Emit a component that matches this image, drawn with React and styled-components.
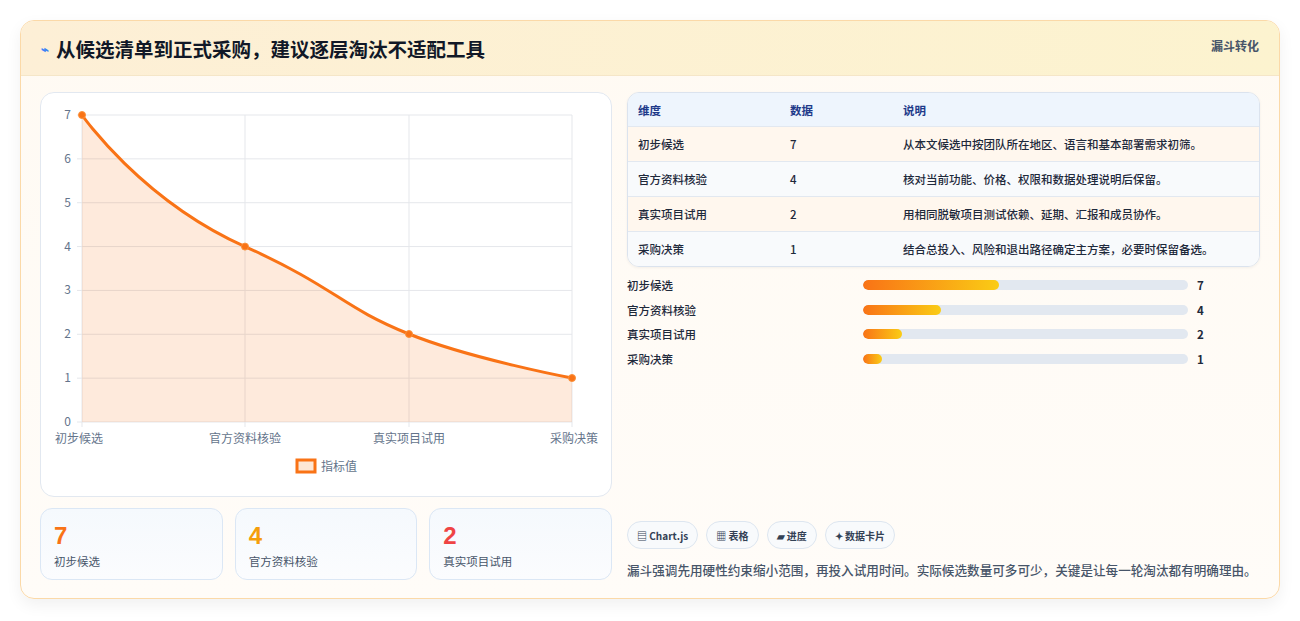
import React from "react";
import styled, { createGlobalStyle } from "styled-components";

const G = createGlobalStyle`
  body{margin:0;background:#fff;font-family:"Noto Sans CJK SC","Noto Sans",sans-serif;color:#1e293b;}
`;
const Page = styled.div`padding:20px 20px 21px;`;
const Card = styled.div`
  border:1px solid #fbd9a8;border-radius:14px;overflow:hidden;
  background:linear-gradient(180deg,#fffaf3,#fffcf8);
  box-shadow:0 6px 16px rgba(0,0,0,0.06);
`;
const Header = styled.div`
  height:54px;display:flex;align-items:center;justify-content:space-between;
  padding:0 20px;background:linear-gradient(90deg,#fdefd6,#fcf3cf);
  border-bottom:1px solid #f5e6c8;
`;
const Title = styled.h2`margin:0;font-size:19.5px;font-weight:700;color:#111827;display:flex;align-items:center;gap:7px;`;
const Bolt = styled.span`color:#3b82f6;font-size:13px;`;
const Tag = styled.span`font-size:12px;font-weight:700;color:#475569;align-self:flex-start;margin-top:16px;`;
const Body = styled.div`display:grid;grid-template-columns:572px 633px;gap:15px;padding:16px 19px 18px;`;
const Col = styled.div`display:flex;flex-direction:column;`;
const Panel = styled.div`height:403px;border:1px solid #e2e8f0;border-radius:14px;background:#fff;overflow:hidden;`;
const Stats = styled.div`display:grid;grid-template-columns:repeat(3,1fr);gap:12px;margin-top:11px;`;
const Stat = styled.div`height:72px;box-sizing:border-box;border:1px solid #dbe7f5;border-radius:12px;background:linear-gradient(180deg,#f5f9fd,#fbfcfe);padding:13px 13px;`;
const StatNum = styled.div`font-size:24px;font-weight:800;line-height:28px;color:${p=>p.c};font-family:"Liberation Sans",sans-serif;`;
const StatLbl = styled.div`font-size:11.5px;color:#475569;margin-top:3px;`;
const Table = styled.div`border:1px solid #dbe3ee;border-radius:12px;overflow:hidden;box-shadow:0 1px 3px rgba(0,0,0,0.05);`;
const Row = styled.div`
  display:grid;grid-template-columns:152px 113px 1fr;align-items:center;padding:0 10px;
  height:${p=>p.h?"33px":"34px"};border-top:${p=>p.first?"none":"1px solid #e2e8f0"};
  background:${p=>p.h?"#eef5fd":p.alt?"#f8fafc":"#fff7ee"};
  font-size:11.5px;font-weight:${p=>p.h?700:500};color:${p=>p.h?"#1e3a8a":"#1e293b"};
`;
const Bars = styled.div`display:flex;flex-direction:column;gap:8px;margin-top:10px;`;
const BarRow = styled.div`display:grid;grid-template-columns:236px 325px 1fr;align-items:center;height:16.5px;font-size:11.5px;font-weight:500;`;
const Track = styled.div`height:10px;border-radius:5px;background:#e2e8f0;overflow:hidden;`;
const Fill = styled.div`height:100%;border-radius:5px;background:linear-gradient(90deg,#f97316,#facc15);`;
const Val = styled.span`padding-left:9px;font-weight:700;`;
const Chips = styled.div`display:flex;gap:8px;margin-top:auto;`;
const Chip = styled.span`height:28px;box-sizing:border-box;padding:0 9px;border:1px solid #dde6f0;border-radius:14px;background:#f8fafc;font-size:10px;font-weight:700;color:#334155;display:flex;align-items:center;gap:3px;`;
const Note = styled.p`margin:10px 0 0;font-size:12.6px;line-height:21px;color:#475569;font-weight:500;`;

const rows=[["初步候选",7,"从本文候选中按团队所在地区、语言和基本部署需求初筛。"],["官方资料核验",4,"核对当前功能、价格、权限和数据处理说明后保留。"],["真实项目试用",2,"用相同脱敏项目测试依赖、延期、汇报和成员协作。"],["采购决策",1,"结合总投入、风险和退出路径确定主方案，必要时保留备选。"]];

function Chart(){
  const x0=41,x1=531,yT=22,yB=329;
  const xs=[41,204,368,531];
  const curve="M41,22 C41,22 100,107 204,153.6 C296,195 299.5,213.5 368,241 C430,266 531,285 531,285";
  return (
    <svg width="572" height="403" style={{display:"block"}} fontFamily="Noto Sans CJK SC, Liberation Sans, sans-serif">
      {[0,1,2,3,4,5,6,7].map(v=>{const y=yB-v*(yB-yT)/7;return <g key={v}><line x1={x0-5} x2={x1} y1={y} y2={y} stroke="#e5e7eb"/><text x={30} y={y+4} fontSize="12" fill="#64748b" textAnchor="end">{v}</text></g>})}
      {xs.map((x,i)=><line key={i} x1={x} x2={x} y1={yT} y2={yB+5} stroke="#e5e7eb"/>)}
      <path d={curve+` L531,${yB} L41,${yB} Z`} fill="rgba(249,115,22,0.15)"/>
      <path d={curve} fill="none" stroke="#f97316" strokeWidth="3"/>
      {[[41,22],[204,153.6],[368,241],[531,285]].map(([x,y],i)=><circle key={i} cx={x} cy={y} r="3.5" fill="#f97316" stroke="#fb923c" strokeWidth="1"/>)}
      {["初步候选","官方资料核验","真实项目试用","采购决策"].map((t,i)=><text key={t} x={xs[i]} y={350} fontSize="12" fill="#64748b" textAnchor={i===0?"start":i===3?"end":"middle"} dx={i===0?-27:i===3?26:0}>{t}</text>)}
      <rect x="256" y="367" width="18" height="12" fill="#fde7d6" stroke="#f97316" strokeWidth="3"/>
      <text x="280" y="378" fontSize="12" fill="#64748b">指标值</text>
    </svg>
  );
}

export default function App(){
  return (<Page><G/><Card>
    <Header><Title><Bolt>⌁</Bolt>从候选清单到正式采购，建议逐层淘汰不适配工具</Title><Tag>漏斗转化</Tag></Header>
    <Body>
      <Col>
        <Panel><Chart/></Panel>
        <Stats>
          <Stat><StatNum c="#f97316">7</StatNum><StatLbl>初步候选</StatLbl></Stat>
          <Stat><StatNum c="#f59e0b">4</StatNum><StatLbl>官方资料核验</StatLbl></Stat>
          <Stat><StatNum c="#ef4444">2</StatNum><StatLbl>真实项目试用</StatLbl></Stat>
        </Stats>
      </Col>
      <Col>
        <Table>
          <Row h first><span>维度</span><span>数据</span><span>说明</span></Row>
          {rows.map((r,i)=><Row key={i} alt={i%2===1}><span>{r[0]}</span><span>{r[1]}</span><span>{r[2]}</span></Row>)}
        </Table>
        <Bars>
          {rows.map(r=><BarRow key={r[0]}><span>{r[0]}</span><Track><Fill style={{width:`${r[1]*19.4/325*100}%`}}/></Track><Val>{r[1]}</Val></BarRow>)}
        </Bars>
        <Chips><Chip>▤ Chart.js</Chip><Chip>▦ 表格</Chip><Chip>▰ 进度</Chip><Chip>✦ 数据卡片</Chip></Chips>
        <Note>漏斗强调先用硬性约束缩小范围，再投入试用时间。实际候选数量可多可少，关键是让每一轮淘汰都有明确理由。</Note>
      </Col>
    </Body>
  </Card></Page>);
}
